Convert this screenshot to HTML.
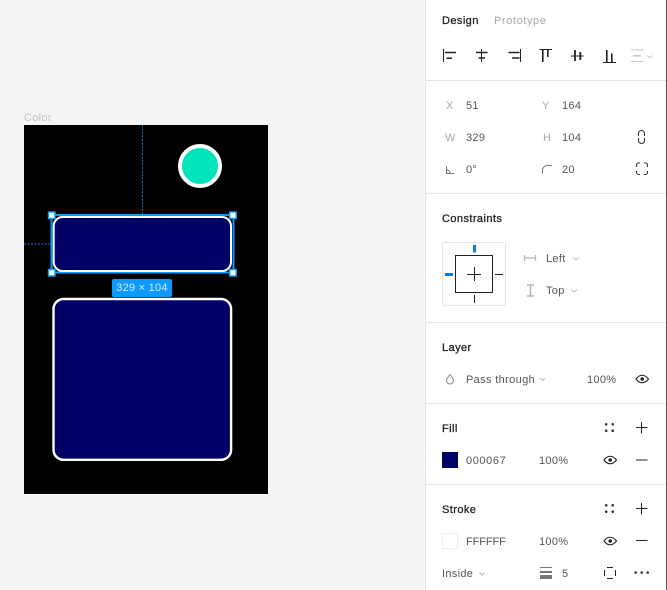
<!DOCTYPE html>
<html><head><meta charset="utf-8"><style>
html,body{margin:0;padding:0;width:667px;height:590px;overflow:hidden;background:#f5f5f5}
body{position:relative;font-family:"Liberation Sans",sans-serif;font-size:11px;color:#333}
.t{position:absolute;line-height:14px;white-space:nowrap;letter-spacing:.3px}
.b{color:#222;letter-spacing:.42px;-webkit-text-stroke:.3px #222}
.g{color:#aaa}
.m{color:#555}
.a{position:absolute}
#p{position:absolute;left:425px;top:0;width:241px;height:590px;background:#fff;border-left:1px solid #e5e5e5}
.hr{position:absolute;left:426px;width:240px;height:1px;background:#e5e5e5}
</style></head><body>
<div id="p"></div>
<div class="a" style="left:666px;top:0;width:1px;height:590px;background:#555"></div>
<div class="hr" style="top:80px"></div>
<div class="hr" style="top:193px"></div>
<div class="hr" style="top:322px"></div>
<div class="hr" style="top:403px"></div>
<div class="hr" style="top:484px"></div>

<div class="t" style="left:24px;top:111px;color:#c4c4c4">Color</div>
<div class="a" style="left:24px;top:125px;width:244px;height:369px;background:#000"></div>
<div class="a" style="left:178px;top:144px;width:36px;height:36px;border:4px solid #fff;border-radius:50%;background:#00e4bb"></div>

<svg class="a" style="left:0;top:0" width="667" height="590" fill="none">
<path d="M142.500 125V215M24 244H51" stroke="#0d99ff" stroke-width="1" stroke-dasharray="2 1.500" opacity=".8"/>
<rect x="51.500" y="215" width="182" height="57.500" stroke="#0d99ff" stroke-width="2"/>
<rect x="53.700" y="217" width="177.300" height="54" rx="9" fill="#000067" stroke="#fff" stroke-width="2"/>
<g fill="#fff" stroke="#0d99ff" stroke-width="1.400">
<rect x="48.500" y="212" width="6.500" height="6.500"/>
<rect x="229.700" y="212" width="6.500" height="6.500"/>
<rect x="48.500" y="269.500" width="6.500" height="6.500"/>
<rect x="229.700" y="269.500" width="6.500" height="6.500"/>
</g>
<rect x="53.500" y="299" width="177.600" height="160.800" rx="10" fill="#000067" stroke="#fff" stroke-width="2.400"/>
</svg>

<div class="a" style="left:112px;top:279px;width:60px;height:18px;border-radius:2px;background:#0d99ff;color:#d4ecff;text-align:center;line-height:19px;letter-spacing:.25px">329 × 104</div>

<div class="t b" style="left:442px;top:14px">Design</div>
<div class="t g" style="left:494px;top:14px;letter-spacing:.6px">Prototype</div>

<svg class="a" style="left:0;top:0" width="667" height="590" fill="none" stroke-width="1">
<g stroke="#222">
<path d="M443.500 49V62"/><path d="M445 52.500H456M446.500 58.200H452" stroke-width="1.500"/>
<path d="M481.500 49V62"/><path d="M476 52.500H487.500M478.500 58H485" stroke-width="1.500"/>
<path d="M520.500 49V62"/><path d="M508.500 52.500H519.500M512 58H519.500" stroke-width="1.500"/>
<path d="M539.500 49.500H552"/><path d="M542.800 50V62M547.800 50V57" stroke-width="1.600"/>
<path d="M571 56H583.500"/><path d="M575 50V61M580.300 52V60" stroke-width="1.800"/>
<path d="M603 62.500H616"/><path d="M606.800 50V62M611.800 53.500V62" stroke-width="1.600"/>
</g>
<g stroke="#c8c8c8">
<path d="M631 50H644M631 61.500H644"/><path d="M633 55.800H641" stroke-width="1.600"/>
<path d="M647 55.500l3 2.500 3-2.500"/>
</g>
<path d="M638.500 136v-2.500a3 3 0 0 1 6 0V136M638.500 138v2.500a3 3 0 0 0 6 0V138" stroke="#333" stroke-width="1.100"/>
<path d="M446.500 166v7.500H454.500M446.500 169.500a4 4 0 0 1 3.500 4" stroke="#777"/>
<path d="M542.500 173.500v-3a5 5 0 0 1 5-5h4.500" stroke="#777"/>
<path d="M636.500 167v-2a2 2 0 0 1 2-2h1.500M644 163h1.500a2 2 0 0 1 2 2v2M647.500 171v1.500a2 2 0 0 1-2 2H644M640 174.500h-1.500a2 2 0 0 1-2-2V171" stroke="#333" stroke-width="1.100"/>
<rect x="442.500" y="242.500" width="63" height="63" rx="1" stroke="#e5e5e5" fill="#fff"/>
<rect x="455.500" y="255.500" width="37" height="37" stroke="#222"/>
<path d="M467 274.500H481M474.500 267V281M495 274.500H503M474.500 295V303" stroke="#222"/>
<path d="M445 274.500H453M474.500 245V252.500" stroke="#0a7fe0" stroke-width="3"/>
<path d="M524.500 255V261M535.500 255V261M525 258H535" stroke="#b5b5b5" stroke-width="1.300"/>
<path d="M527 285H534M527 296H534M530.500 285V296" stroke="#b5b5b5" stroke-width="1.500"/>
<path d="M573 257.500l3 2.500 3-2.500M571 289.500l3 2.500 3-2.500M540 378l2.500 2.500 2.500-2.500M479.500 572.500l2.500 2.500 2.500-2.500" stroke="#bbb"/>
<path d="M450 374.500c-2 2.500-3.500 4-3.500 6a3.500 3.500 0 0 0 7 0c0-2-1.500-3.500-3.500-6z" stroke="#888"/>
<g stroke="#222"><path d="M636 379c3.500-5 8.500-5 12.500 0c-4 5-9 5-12.500 0z" stroke-width="1.100"/><circle cx="642.200" cy="379" r="1.800" fill="#222" stroke="none"/></g>
<g stroke="#222"><path d="M604 460c3.500-5 8.500-5 12.500 0c-4 5-9 5-12.500 0z" stroke-width="1.100"/><circle cx="610.200" cy="460" r="1.800" fill="#222" stroke="none"/></g>
<g stroke="#222"><path d="M604 541c3.500-5 8.500-5 12.500 0c-4 5-9 5-12.500 0z" stroke-width="1.100"/><circle cx="610.200" cy="541" r="1.800" fill="#222" stroke="none"/></g>
<g fill="#333"><circle cx="606.200" cy="424.300" r="1.300"/><circle cx="612.700" cy="424.300" r="1.300"/><circle cx="606.200" cy="430.700" r="1.300"/><circle cx="612.700" cy="430.700" r="1.300"/>
<circle cx="606.200" cy="505.300" r="1.300"/><circle cx="612.700" cy="505.300" r="1.300"/><circle cx="606.200" cy="511.700" r="1.300"/><circle cx="612.700" cy="511.700" r="1.300"/>
<circle cx="635.700" cy="572.500" r="1.300"/><circle cx="641.700" cy="572.500" r="1.300"/><circle cx="647.700" cy="572.500" r="1.300"/></g>
<path d="M636 427.500H647.500M641.500 422V433.500M636 460H647.500M636 508.500H647.500M641.500 503V514.500M636 540.500H647.500" stroke="#222"/>
<rect x="442" y="452" width="16" height="16" fill="#000067"/>
<rect x="442.500" y="533.500" width="15" height="15" stroke="#eee" fill="#fff"/>
<path d="M540 567.500H552" stroke="#777"/><path d="M540 572H552" stroke="#777" stroke-width="2"/><path d="M540 577H552" stroke="#777" stroke-width="4"/>
<path d="M607 567.500H613M607 578.500H613M604.500 570V576M615.500 570V576" stroke="#222"/>
</svg>

<div class="t g" style="left:446px;top:99px">X</div>
<div class="t m" style="left:466px;top:99px">51</div>
<div class="t g" style="left:542px;top:99px">Y</div>
<div class="t m" style="left:562px;top:99px">164</div>
<div class="t g" style="left:445px;top:131px">W</div>
<div class="t m" style="left:466px;top:131px">329</div>
<div class="t g" style="left:543px;top:131px">H</div>
<div class="t m" style="left:562px;top:131px">104</div>
<div class="t m" style="left:466px;top:163px">0°</div>
<div class="t m" style="left:562px;top:163px">20</div>

<div class="t b" style="left:442px;top:212px">Constraints</div>
<div class="t m" style="left:546px;top:252px">Left</div>
<div class="t m" style="left:546px;top:284px">Top</div>

<div class="t b" style="left:442px;top:341px">Layer</div>
<div class="t m" style="left:466px;top:373px;letter-spacing:.35px">Pass through</div>
<div class="t m" style="left:587px;top:373px">100%</div>

<div class="t b" style="left:442px;top:422px">Fill</div>
<div class="t m" style="left:466px;top:454px;letter-spacing:.6px">000067</div>
<div class="t m" style="left:539px;top:454px">100%</div>

<div class="t b" style="left:442px;top:503px">Stroke</div>
<div class="t m" style="left:466px;top:535px;letter-spacing:-.1px">FFFFFF</div>
<div class="t m" style="left:539px;top:535px">100%</div>
<div class="t m" style="left:442px;top:567px">Inside</div>
<div class="t m" style="left:562px;top:567px">5</div>
</body></html>
